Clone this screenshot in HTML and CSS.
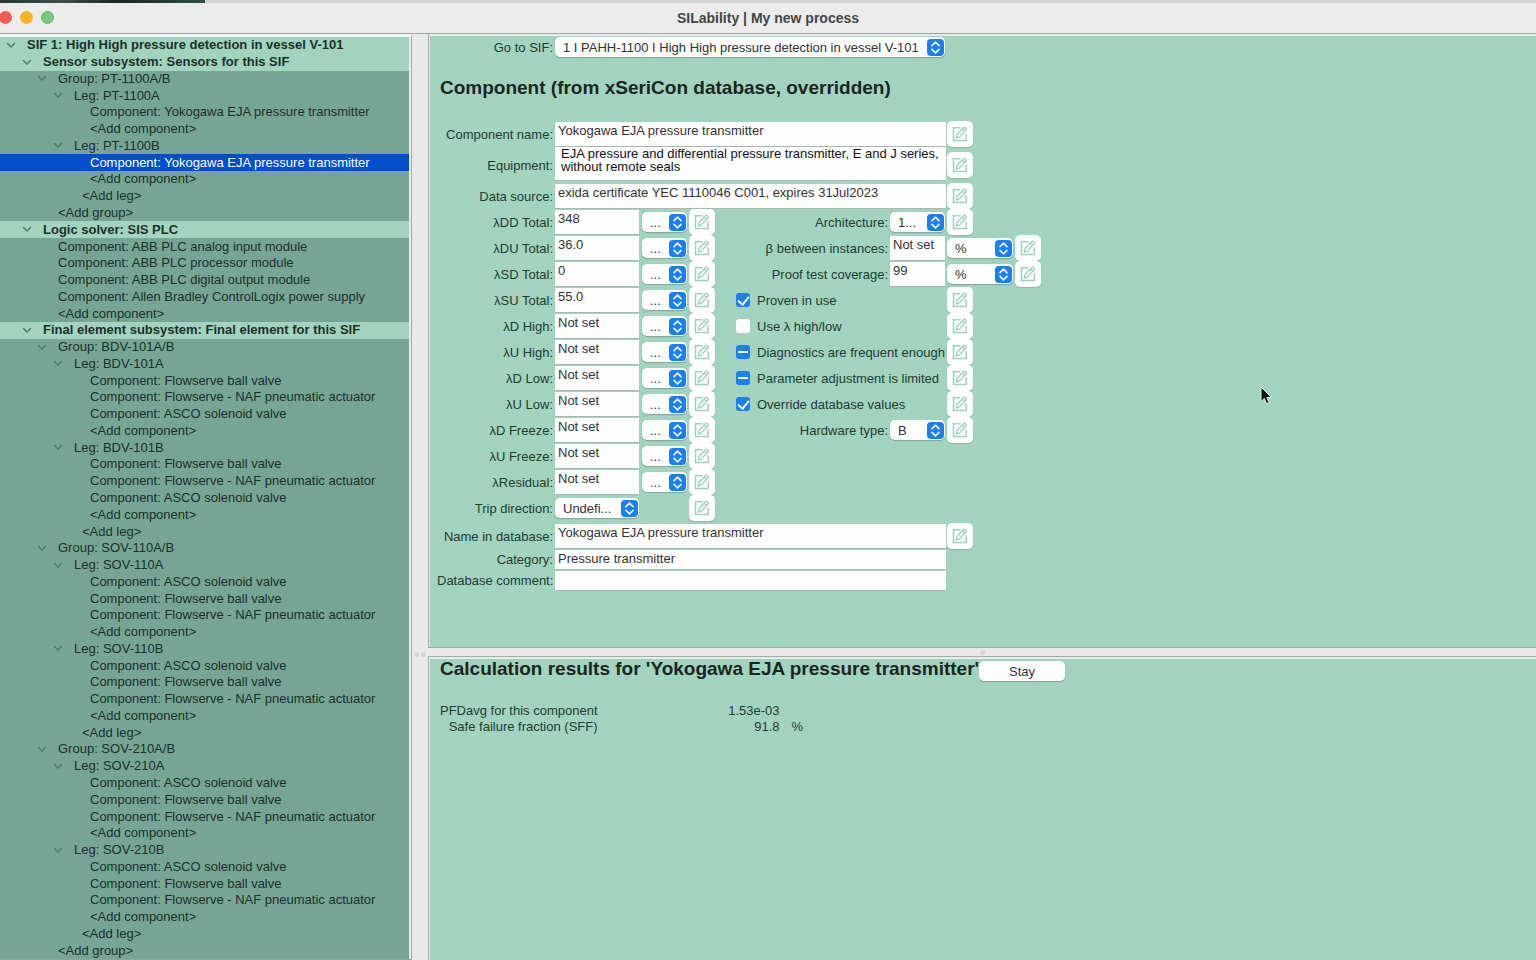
FILE: index.html
```
<!DOCTYPE html>
<html lang="en">
<head>
    <meta charset="UTF-8">
    <title>SILability | My new process</title>
    <link rel="stylesheet" href="styles.css">
</head>
<body>
    <svg class="symbols" aria-hidden="true">
        <symbol id="edit" viewBox="0 0 16 16">
            <path d="M8.500 1.800H1.500v12.700h12.700V7.500" fill="none" stroke="#a0d3bd" stroke-width="1.500"/>
            <path d="M4.300 12l.8-3.700L11.800 1.500c1-.9 3.200 1.200 2.300 2.300L7.600 10.900zM10.300 3.100l2.300 2.300" fill="none" stroke="#a0d3bd" stroke-width="1.400" stroke-linejoin="round"/>
        </symbol>
        <symbol id="updown" viewBox="0 0 17 17">
            <rect width="17" height="17" rx="4" fill="#1b7ff0"/>
            <path d="M5 6.700l3.500-3.500L12 6.700M5 10.300l3.500 3.500 3.500-3.500" fill="none" stroke="#e8f3ff" stroke-width="1.700" stroke-linecap="round" stroke-linejoin="round"/>
        </symbol>
        <symbol id="chevron" viewBox="0 0 10 10">
            <path d="M1.500 3.500L5 7l3.500-3.500" fill="none" stroke="#4b7d70" stroke-width="1.500" stroke-linecap="round"/>
        </symbol>
    </svg>

    <div class="desktop"></div>
    <header class="titlebar">
        <div class="lights">
            <span class="light close"></span>
            <span class="light minimize"></span>
            <span class="light zoom"></span>
        </div>
        <h1>SILability | My new process</h1>
    </header>

    <main class="window">
        <ul class="tree" id="tree"></ul>
        <div class="sash vertical"><i></i><i></i></div>

        <div class="right">
            <section class="panel component">
                <form class="form">
                    <label class="label" for="sif">Go to SIF:</label>
                    <div class="select wide">
                        <select id="sif"><option>1 I PAHH-1100 I High High pressure detection in vessel V-101</option></select>
                        <svg><use href="#updown"/></svg>
                    </div>
                </form>
                <h2>Component (from xSeriCon database, overridden)</h2>

                <form class="form" id="fields">
                    <label class="label" for="name">Component name:</label>
                    <input class="wide" id="name" value="Yokogawa EJA pressure transmitter">
                    <button class="edit c7" type="button" aria-label="Edit component name"><svg><use href="#edit"/></svg></button>

                    <label class="label" for="equipment">Equipment:</label>
                    <textarea class="wide" id="equipment" rows="2">EJA pressure and differential pressure transmitter, E and J series, without remote seals</textarea>
                    <button class="edit c7" type="button" aria-label="Edit equipment"><svg><use href="#edit"/></svg></button>

                    <label class="label" for="source">Data source:</label>
                    <input class="wide" id="source" value="exida certificate YEC 1110046 C001, expires 31Jul2023">
                    <button class="edit c7" type="button" aria-label="Edit data source"><svg><use href="#edit"/></svg></button>
                </form>

                <form class="form rates" id="rates"></form>

                <form class="form database">
                    <label class="label" for="dbname">Name in database:</label>
                    <input class="wide" id="dbname" value="Yokogawa EJA pressure transmitter">
                    <button class="edit c7" type="button" aria-label="Edit name in database"><svg><use href="#edit"/></svg></button>

                    <label class="label" for="category">Category:</label>
                    <input class="wide short" id="category" value="Pressure transmitter">

                    <label class="label" for="comment">Database comment:</label>
                    <input class="wide short" id="comment" value="">
                </form>
            </section>

            <div class="sash horizontal"><i></i></div>

            <section class="panel results">
                <div class="results-head">
                    <h2>Calculation results for 'Yokogawa EJA pressure transmitter'</h2>
                    <button class="stay" type="button">Stay</button>
                </div>
                <table>
                    <tr><th scope="row">PFDavg for this component</th><td class="value">1.53e-03</td><td></td></tr>
                    <tr><th scope="row">Safe failure fraction (SFF)</th><td class="value">91.8</td><td class="unit">%</td></tr>
                </table>
            </section>
        </div>
    </main>

    <svg class="pointer" viewBox="0 0 12 19" aria-hidden="true">
        <path d="M1 1v14.500l3.300-3.100 2.300 5.300 2.500-1.100-2.300-5.100h4.500z" fill="#111" stroke="#dfeee8" stroke-width="1"/>
    </svg>

    <script src="script.js"></script>
</body>
</html>
```
FILE: styles.css
```
* {
    box-sizing: border-box;
}
body {
    margin: 0;
    height: 100vh;
    display: flex;
    flex-direction: column;
    overflow: hidden;
    background: #e9e9e9;
    color: #1f3a31;
    font-family: "Liberation Sans", Arial, sans-serif;
    font-size: 13px;
}
h1, h2, ul {
    margin: 0;
    padding: 0;
}
.symbols {
    display: none;
}
.desktop {
    height: 3px;
    background: linear-gradient(to right, #26362f 0, #3c5148 60px, #1d2422 120px, #2e5145 205px, #d4d4d4 205px);
}
.titlebar {
    height: 31px;
    display: grid;
    grid-template-columns: 1fr auto 1fr;
    align-items: center;
    padding-bottom: 1px;
    background: #ececec;
    border-bottom: 1px solid #a3a3a3;
}
.titlebar h1 {
    font-size: 14px;
    line-height: 20px;
    color: #454545;
}
.lights {
    display: flex;
    gap: 8px;
    margin-left: -1px;
}
.light {
    width: 13px;
    height: 13px;
    border-radius: 50%;
}
.close {
    background: #f25a52;
}
.minimize {
    background: #fcb320;
}
.zoom {
    background: #7acb79;
    border: 1px solid #62b565;
}

/* layout */
.window {
    flex: 1;
    min-height: 0;
    display: flex;
}
.right {
    flex: 1;
    min-width: 0;
    display: flex;
    flex-direction: column;
}
.panel {
    background: #a2d3be;
    border: 1px solid #a8a8a8;
    border-right: 0;
    box-shadow: inset 1px 2px 0 #e4efe9;
    padding: 3px 0 0 8px;
}
.component {
    border-top: 0;
    padding-bottom: 56px;
}
.results {
    flex: 1;
    padding: 0 0 0 11px;
    border-bottom: 0;
}
.sash {
    display: flex;
    align-items: center;
    justify-content: center;
    gap: 2px;
    background: #e9e9e9;
}
.sash i {
    width: 5px;
    height: 5px;
    border-radius: 50%;
    background: #d6d6d6;
}
.vertical {
    width: 16px;
    padding-top: 314px;
}
.horizontal {
    height: 8px;
}

/* tree */
.tree {
    width: 412px;
    display: grid;
    grid-auto-rows: minmax(0, 1fr);
    list-style: none;
    background: #76a595;
    border-top: 3px solid #f1f5f3;
    border-right: 1px solid #a8a8a8;
    border-bottom: 1px solid #8fa39b;
    box-shadow: inset -2px 0 0 #e4efe9;
    color: #1d2f29;
}
.tree li {
    display: flex;
    align-items: center;
    margin-right: 2px;
    padding-bottom: 1px;
    white-space: nowrap;
}
.tree svg {
    width: 10px;
    height: 10px;
    margin-right: 11px;
}
.tree .section {
    background: #a2d3be;
    font-weight: bold;
}
.tree .selected {
    background: #004fcf;
    color: #fff;
}
.level0 { padding-left: 6px; }
.level1 { padding-left: 22px; }
.level2 { padding-left: 37px; }
.level3 { padding-left: 53px; }
.leaf2 { padding-left: 58px; }
.leaf3 { padding-left: 82px; }
.leaf4 { padding-left: 90px; }

/* forms */
h2 {
    font-size: 19px;
    line-height: 24px;
    color: #1a2622;
}
.component h2 {
    margin: 19px 3px 21px;
}
.form {
    display: grid;
    grid-template-columns: 118px 87px 47px 27px 174px 57px 27px 41px 27px;
    align-items: center;
}
.label {
    grid-column: 1;
    padding-right: 2px;
    text-align: right;
    white-space: nowrap;
}
.label.second {
    grid-column: 5;
}
.wide {
    grid-column: 2 / 7;
    margin-right: 1px;
}
input, textarea, select, button {
    font: inherit;
    color: #333;
    border: 0;
    border-radius: 0;
    outline: 0;
    min-width: 0;
    background: #fdfdfd;
}
input, textarea {
    height: 25px;
    padding: 0 3px 7px;
    border-bottom: 1px solid #a9b8b1;
}
.short {
    height: 20px;
    margin-top: 1px;
    padding-bottom: 2px;
}
textarea {
    height: 34px;
    margin-bottom: 2px;
    padding: 0 6px;
    line-height: 13px;
    color: #111;
    resize: none;
    overflow: hidden;
}
.select {
    position: relative;
    height: 20px;
    margin-right: 2px;
}
.select select {
    appearance: none;
    display: block;
    width: 100%;
    height: 20px;
    padding: 0 20px 0 8px;
    border-radius: 5px;
    box-shadow: 0 1px 1px #7fa597;
}
.select svg {
    position: absolute;
    top: 2px;
    right: 1px;
    width: 17px;
    height: 17px;
    pointer-events: none;
}
.edit {
    width: 26px;
    height: 26px;
    padding: 5px;
    border-radius: 5px;
    box-shadow: 0 1px 1px #8db8a7;
}
.edit svg {
    display: block;
    width: 16px;
    height: 16px;
}
.c2 { grid-column: 2; }
.c3 { grid-column: 3; }
.c4 { grid-column: 4; }
.c6 { grid-column: 6; }
.c7 { grid-column: 7; }
.c78 { grid-column: 7 / 9; }
.c9 { grid-column: 9; }
.rates {
    grid-auto-rows: 26px;
}
.rates input.c2, .select.c2 {
    margin-right: 3px;
}
.rates input.c6 {
    margin-right: 2px;
}
.database {
    padding-top: 2px;
}
.check {
    grid-column: 5 / 7;
    display: flex;
    align-items: center;
    gap: 7px;
    padding-left: 20px;
    white-space: nowrap;
}
.check input {
    appearance: none;
    display: grid;
    place-items: center;
    width: 14px;
    height: 14px;
    margin: 0;
    padding: 0;
    border: 0;
    border-radius: 3px;
}
.check input:checked, .check input:indeterminate {
    background: #1b7ff0;
}
.check input:checked::after {
    content: "";
    width: 5px;
    height: 9px;
    margin-bottom: 2px;
    border: solid #fff;
    border-width: 0 2px 2px 0;
    transform: rotate(40deg);
}
.check input:indeterminate::after {
    content: "";
    width: 10px;
    height: 2px;
    background: #fff;
}

/* results */
.results-head {
    display: flex;
    align-items: flex-start;
}
.stay {
    width: 86px;
    height: 20px;
    margin-top: 4px;
    border-radius: 5px;
    box-shadow: 0 1px 1px #7fa597;
}
.results table {
    margin-top: 22px;
    border-collapse: collapse;
    line-height: 16px;
}
.results th, .results td {
    padding: 0;
    font-weight: normal;
    text-align: right;
}
.results .value {
    width: 182px;
}
.results .unit {
    padding-left: 12px;
}

.pointer {
    position: absolute;
    left: 1260px;
    top: 386px;
    width: 12px;
    height: 19px;
}
```
FILE: script.js
```
const icon = (id) => `<svg><use href="#${id}"/></svg>`;

const valve = ['leaf4', 'Component: Flowserve ball valve'];
const actuator = ['leaf4', 'Component: Flowserve - NAF pneumatic actuator'];
const solenoid = ['leaf4', 'Component: ASCO solenoid valve'];
const addComponent = ['leaf4', '<Add component>'];
const addLeg = ['leaf3', '<Add leg>'];
const addGroup = ['leaf2', '<Add group>'];

const rows = [
    ['level0 section', 'SIF 1: High High pressure detection in vessel V-101'],
    ['level1 section', 'Sensor subsystem: Sensors for this SIF'],
    ['level2', 'Group: PT-1100A/B'],
    ['level3', 'Leg: PT-1100A'],
    ['leaf4', 'Component: Yokogawa EJA pressure transmitter'],
    addComponent,
    ['level3', 'Leg: PT-1100B'],
    ['leaf4 selected', 'Component: Yokogawa EJA pressure transmitter'],
    addComponent, addLeg, addGroup,
    ['level1 section', 'Logic solver: SIS PLC'],
    ['leaf2', 'Component: ABB PLC analog input module'],
    ['leaf2', 'Component: ABB PLC processor module'],
    ['leaf2', 'Component: ABB PLC digital output module'],
    ['leaf2', 'Component: Allen Bradley ControlLogix power supply'],
    ['leaf2', '<Add component>'],
    ['level1 section', 'Final element subsystem: Final element for this SIF'],
    ['level2', 'Group: BDV-101A/B'],
    ['level3', 'Leg: BDV-101A'], valve, actuator, solenoid, addComponent,
    ['level3', 'Leg: BDV-101B'], valve, actuator, solenoid, addComponent,
    addLeg,
    ['level2', 'Group: SOV-110A/B'],
    ['level3', 'Leg: SOV-110A'], solenoid, valve, actuator, addComponent,
    ['level3', 'Leg: SOV-110B'], solenoid, valve, actuator, addComponent,
    addLeg,
    ['level2', 'Group: SOV-210A/B'],
    ['level3', 'Leg: SOV-210A'], solenoid, valve, actuator, addComponent,
    ['level3', 'Leg: SOV-210B'], solenoid, valve, actuator, addComponent,
    addLeg, addGroup
];

const tree = document.getElementById('tree');
rows.forEach(([cls, text]) => {
    const li = document.createElement('li');
    li.className = cls;
    if (cls.startsWith('level')) li.innerHTML = icon('chevron');
    li.append(text);
    tree.append(li);
});

const edit = (col, name) =>
    `<button class="edit ${col}" type="button" aria-label="Edit ${name}">${icon('edit')}</button>`;
const select = (col, id, name, text) =>
    `<div class="select ${col}"><select id="${id}" aria-label="${name}"><option>${text}</option></select>${icon('updown')}</div>`;
const check = (id, name, state) =>
    `<div class="check"><input type="checkbox" id="${id}" ${state}><label for="${id}">${name}</label></div>${edit('c7', name)}`;
const second = (id, name) => `<label class="label second" for="${id}">${name}:</label>`;

// right hand side of each rate row
const options = [
    second('arch', 'Architecture') + select('c6', 'arch', 'Architecture', '1...') + edit('c7', 'architecture'),
    second('beta', 'β between instances') + '<input class="c6" id="beta" value="Not set">' +
        select('c78', 'betaUnit', 'β unit', '%') + edit('c9', 'β'),
    second('ptc', 'Proof test coverage') + '<input class="c6" id="ptc" value="99">' +
        select('c78', 'ptcUnit', 'Coverage unit', '%') + edit('c9', 'coverage'),
    check('proven', 'Proven in use', 'checked'),
    check('highlow', 'Use λ high/low', ''),
    check('diagnostics', 'Diagnostics are frequent enough', 'class="mixed"'),
    check('parameter', 'Parameter adjustment is limited', 'class="mixed"'),
    check('override', 'Override database values', 'checked'),
    second('hardware', 'Hardware type') + select('c6', 'hardware', 'Hardware type', 'B') + edit('c7', 'hardware type')
];

const rates = [
    ['λDD Total', '348'], ['λDU Total', '36.0'], ['λSD Total', '0'], ['λSU Total', '55.0'],
    ['λD High', 'Not set'], ['λU High', 'Not set'], ['λD Low', 'Not set'], ['λU Low', 'Not set'],
    ['λD Freeze', 'Not set'], ['λU Freeze', 'Not set'], ['λResidual', 'Not set']
];

document.getElementById('rates').innerHTML = rates.map(([name, value], i) =>
    `<label class="label" for="rate${i}">${name}:</label><input class="c2" id="rate${i}" value="${value}">` +
    select('c3', 'unit' + i, name + ' unit', '...') + edit('c4', name) + (options[i] || '')
).join('') +
    '<label class="label" for="trip">Trip direction:</label>' +
    select('c2', 'trip', 'Trip direction', 'Undefi...') + edit('c4', 'trip direction');

document.querySelectorAll('.mixed').forEach((box) => { box.indeterminate = true; });
```
